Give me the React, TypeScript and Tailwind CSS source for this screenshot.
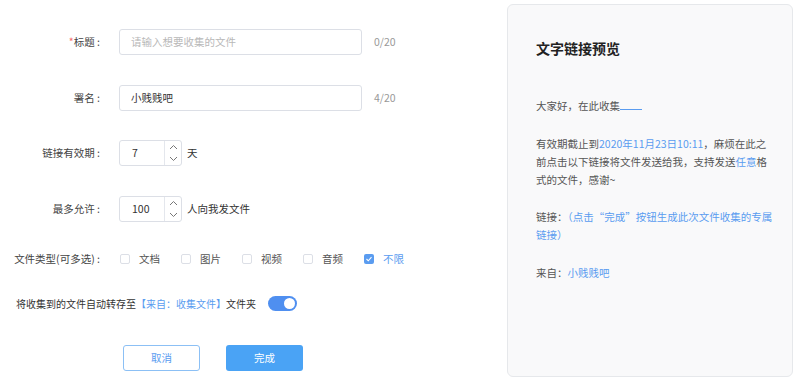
import React from "react";

const font = { fontFamily: '"Noto Sans CJK SC", "Noto Sans", sans-serif' };

function Spinner() {
  return (
    <div className="flex flex-col w-[17px] border-l border-[#e4e7ed] h-full">
      <div className="flex-1 flex items-center justify-center">
        <svg width="9" height="6" viewBox="0 0 9 6"><path d="M1 5 L4.5 1.5 L8 5" fill="none" stroke="#777" strokeWidth="1" /></svg>
      </div>
      <div className="flex-1 flex items-center justify-center">
        <svg width="9" height="6" viewBox="0 0 9 6"><path d="M1 1 L4.5 4.5 L8 1" fill="none" stroke="#777" strokeWidth="1" /></svg>
      </div>
    </div>
  );
}

function Check({ label, checked }: { label: string; checked?: boolean }) {
  return (
    <div className="flex items-center w-[61px]">
      {checked ? (
        <div className="w-[10px] h-[10px] rounded-[2px] bg-[#5a9cf0] flex items-center justify-center">
          <svg width="8" height="8" viewBox="0 0 8 8"><path d="M1.5 4 L3.3 5.8 L6.5 2.2" fill="none" stroke="#fff" strokeWidth="1.1" /></svg>
        </div>
      ) : (
        <div className="w-[10px] h-[10px] rounded-[2px] border border-[#dcdfe6] bg-white" />
      )}
      <span className={`ml-[9px] text-[10.5px] ${checked ? "text-[#5a9cf0]" : "text-[#555]"}`}>{label}</span>
    </div>
  );
}

export default function App() {
  return (
    <div className="w-[800px] h-[386px] bg-white flex" style={font}>
      <div className="w-[507px] pt-[29px]">
        <div className="flex items-center h-[26px]">
          <div className="w-[100px] text-right text-[10.5px] text-[#444]"><span className="text-[#f56c6c]">*</span>标题 :</div>
          <div className="ml-[19px] w-[243px] h-[26px] border border-[#dcdfe6] rounded-[3px] flex items-center px-[11px] text-[10.5px] text-[#b8b8b8]">请输入想要收集的文件</div>
          <div className="ml-[12px] text-[10.5px] text-[#999]">0/20</div>
        </div>
        <div className="flex items-center h-[26px] mt-[30px]">
          <div className="w-[100px] text-right text-[10.5px] text-[#444]">署名 :</div>
          <div className="ml-[19px] w-[243px] h-[26px] border border-[#dcdfe6] rounded-[3px] flex items-center px-[11px] text-[10.5px] text-[#333]">小贱贱吧</div>
          <div className="ml-[12px] text-[10.5px] text-[#999]">4/20</div>
        </div>
        <div className="flex items-center h-[26px] mt-[29px]">
          <div className="w-[100px] text-right text-[10.5px] text-[#444]">链接有效期 :</div>
          <div className="ml-[19px] w-[63px] h-[26px] border border-[#dcdfe6] rounded-[3px] flex items-center text-[10.5px] text-[#333]">
            <div className="flex-1 pl-[12px]">7</div>
            <Spinner />
          </div>
          <div className="ml-[5px] text-[10.5px] text-[#333]">天</div>
        </div>
        <div className="flex items-center h-[26px] mt-[30px]">
          <div className="w-[100px] text-right text-[10.5px] text-[#444]">最多允许 :</div>
          <div className="ml-[19px] w-[63px] h-[26px] border border-[#dcdfe6] rounded-[3px] flex items-center text-[10.5px] text-[#333]">
            <div className="flex-1 pl-[12px]">100</div>
            <Spinner />
          </div>
          <div className="ml-[5px] text-[10.5px] text-[#333]">人向我发文件</div>
        </div>
        <div className="flex items-center h-[26px] mt-[24px]">
          <div className="w-[100px] text-right text-[10.5px] text-[#444] whitespace-nowrap">文件类型(可多选) :</div>
          <div className="ml-[20px] flex items-center">
            <Check label="文档" />
            <Check label="图片" />
            <Check label="视频" />
            <Check label="音频" />
            <Check label="不限" checked />
          </div>
        </div>
        <div className="flex items-center h-[26px] mt-[18px] pl-[16px]">
          <div className="text-[10px] text-[#333] whitespace-nowrap">
            将收集到的文件自动转存至<span className="text-[#5a9cf0]">【来自：收集文件】</span>文件夹
          </div>
          <div className="ml-[12px] w-[29px] h-[15px] rounded-full bg-[#4f8ff0] flex items-center justify-end pr-[2px]">
            <div className="w-[11px] h-[11px] rounded-full bg-white" />
          </div>
        </div>
        <div className="flex items-center mt-[29px] pl-[123px] gap-[26px]">
          <div className="w-[77px] h-[26px] border border-[#8cc0f5] rounded-[3px] flex items-center justify-center text-[10.5px] text-[#5a9cf0]">取消</div>
          <div className="w-[77px] h-[26px] bg-[#4aa3f5] rounded-[3px] flex items-center justify-center text-[10.5px] text-white">完成</div>
        </div>
      </div>
      <div className="mt-[4px] w-[286px] h-[373px] bg-[#f9f9fa] border border-[#e6e8eb] rounded-[6px] pl-[28px] pr-[20px] pt-[33px] text-[10.5px] text-[#555] leading-[18px] whitespace-nowrap">
        <div className="text-[14px] font-bold text-[#222] leading-[20px]">文字链接预览</div>
        <div className="mt-[39px]">大家好，在此收集<span className="inline-block w-[22px] border-b border-[#5a9cf0] align-baseline"></span></div>
        <div className="mt-[20px]">
          有效期截止到<span className="text-[#5a9cf0]">2020年11月23日10:11</span>，麻烦在此之
          <br />
          前点击以下链接将文件发送给我，支持发送<span className="text-[#5a9cf0]">任意</span>格
          <br />
          式的文件，感谢~
        </div>
        <div className="mt-[19px]">
          链接：<span className="text-[#5a9cf0]">（点击“完成”按钮生成此次文件收集的专属</span>
          <br />
          <span className="text-[#5a9cf0]">链接）</span>
        </div>
        <div className="mt-[20px]">
          来自：<span className="text-[#5a9cf0]">小贱贱吧</span>
        </div>
      </div>
    </div>
  );
}
